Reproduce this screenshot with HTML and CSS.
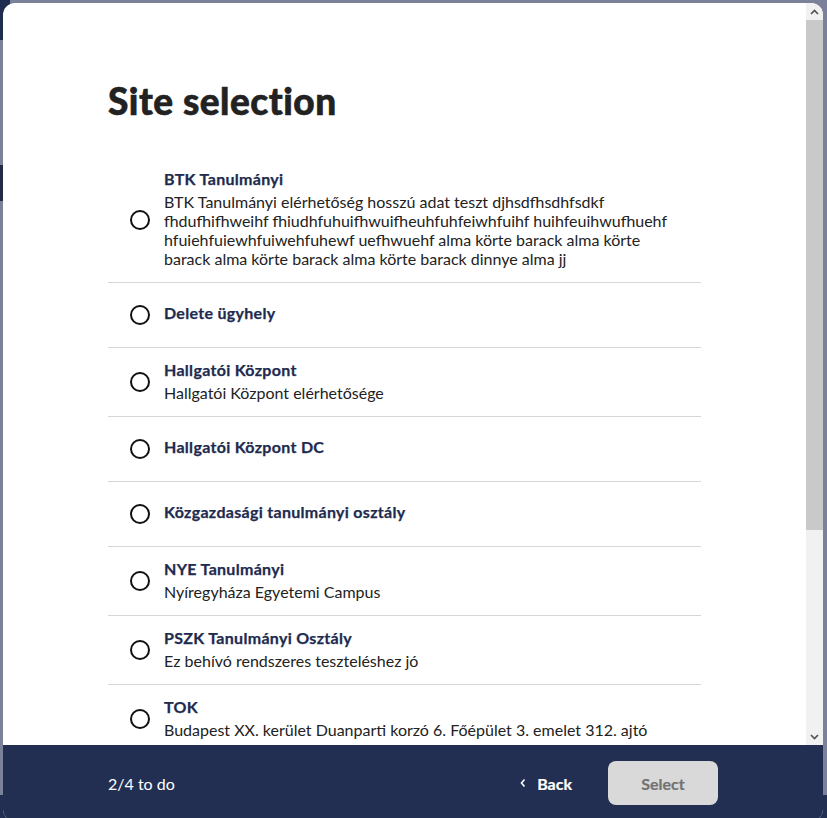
FILE: index.html
```html
<!DOCTYPE html>
<html lang="hu">
<head>
<meta charset="utf-8">
<title>Site selection</title>
<link rel="stylesheet" href="styles.css">
</head>
<body>
<div class="backdrop">
  <div class="bg-header"></div>
  <div class="bg-side"></div>
  <div class="bg-footer"></div>
</div>
<div class="modal" role="dialog" aria-labelledby="title">
  <div class="modal-main">
    <div class="modal-body">
      <h1 id="title" class="modal-title">Site selection</h1>
      <ul class="site-list">
        <li class="site">
          <span class="radio"></span>
          <div class="site-text">
            <div class="site-name">BTK Tanulmányi</div>
            <div class="site-desc">BTK Tanulmányi elérhetőség hosszú adat teszt djhsdfhsdhfsdkf fhdufhifhweihf fhiudhfuhuifhwuifheuhfuhfeiwhfuihf huihfeuihwufhuehf hfuiehfuiewhfuiwehfuhewf uefhwuehf alma körte barack alma körte barack alma körte barack alma körte barack dinnye alma jj</div>
          </div>
        </li>
        <li class="site">
          <span class="radio"></span>
          <div class="site-text">
            <div class="site-name">Delete ügyhely</div>
          </div>
        </li>
        <li class="site">
          <span class="radio"></span>
          <div class="site-text">
            <div class="site-name">Hallgatói Központ</div>
            <div class="site-desc">Hallgatói Központ elérhetősége</div>
          </div>
        </li>
        <li class="site">
          <span class="radio"></span>
          <div class="site-text">
            <div class="site-name">Hallgatói Központ DC</div>
          </div>
        </li>
        <li class="site">
          <span class="radio"></span>
          <div class="site-text">
            <div class="site-name">Közgazdasági tanulmányi osztály</div>
          </div>
        </li>
        <li class="site">
          <span class="radio"></span>
          <div class="site-text">
            <div class="site-name">NYE Tanulmányi</div>
            <div class="site-desc">Nyíregyháza Egyetemi Campus</div>
          </div>
        </li>
        <li class="site">
          <span class="radio"></span>
          <div class="site-text">
            <div class="site-name">PSZK Tanulmányi Osztály</div>
            <div class="site-desc">Ez behívó rendszeres teszteléshez jó</div>
          </div>
        </li>
        <li class="site">
          <span class="radio"></span>
          <div class="site-text">
            <div class="site-name">TOK</div>
            <div class="site-desc">Budapest XX. kerület Duanparti korzó 6. Főépület 3. emelet 312. ajtó</div>
          </div>
        </li>
      </ul>
    </div>
    <div class="scrollbar" aria-hidden="true">
      <div class="sb-btn">
        <svg width="9" height="6" viewBox="0 0 9 6"><path d="M1 5 L4.5 1.5 L8 5" fill="none" stroke="#505050" stroke-width="1.6"/></svg>
      </div>
      <div class="sb-track"><div class="sb-thumb"></div></div>
      <div class="sb-btn">
        <svg width="9" height="6" viewBox="0 0 9 6"><path d="M1 1 L4.5 4.5 L8 1" fill="none" stroke="#505050" stroke-width="1.6"/></svg>
      </div>
    </div>
  </div>
  <div class="modal-footer">
    <span class="progress">2/4 to do</span>
    <div class="actions">
      <button class="btn-back" type="button">
        <svg width="8" height="10" viewBox="0 0 8 10" aria-hidden="true"><path d="M5.5 1.5 L2.5 5 L5.5 8.5" fill="none" stroke="#fff" stroke-width="1.6"/></svg>
        Back
      </button>
      <button class="btn-select" type="button" disabled>Select</button>
    </div>
  </div>
</div>
</body>
</html>
```

FILE: styles.css
```css
html, body {
  margin: 0;
  padding: 0;
  height: 100%;
}

body {
  background: #7b8199;
  font-family: Lato, "Liberation Sans", sans-serif;
  overflow: hidden;
}

.backdrop {
  position: fixed;
  inset: 0;
}

.bg-header {
  position: absolute;
  left: 0;
  top: 0;
  width: 10px;
  height: 40px;
  background: #1f2c4f;
}

.bg-side {
  position: absolute;
  left: 0;
  top: 165px;
  width: 10px;
  height: 36px;
  background: #222a44;
}

.bg-footer {
  position: absolute;
  left: 0;
  right: 0;
  bottom: 0;
  height: 23px;
  background: #222f52;
}

.modal {
  position: absolute;
  left: 3px;
  top: 3px;
  width: 820px;
  height: 818px;
  background: #fff;
  border-radius: 12px;
  overflow: hidden;
  display: flex;
  flex-direction: column;
}

.modal-main {
  flex: 1;
  min-height: 0;
  display: flex;
}

.modal-body {
  flex: 1;
  min-width: 0;
  overflow: hidden;
  padding: 0 105px;
}

.scrollbar {
  flex: none;
  width: 17px;
  display: flex;
  flex-direction: column;
  background: #f1f1f1;
}

.sb-btn {
  flex: none;
  height: 17px;
  display: flex;
  align-items: center;
  justify-content: center;
}

.sb-track {
  flex: 1;
}

.sb-thumb {
  height: 510px;
  background: #c9c9c9;
}

.modal-title {
  margin: 77px 0 0;
  font-size: 37px;
  line-height: 42px;
  font-weight: 900;
  letter-spacing: 0.5px;
  color: #222;
  -webkit-text-stroke: 0.6px #222;
}

.site-list {
  list-style: none;
  margin: 35px 0 0;
  padding: 0;
}

.site {
  display: flex;
  align-items: center;
  gap: 14px;
  min-height: 65px;
  box-sizing: border-box;
  padding: 11px 22px 14px;
  border-bottom: 1px solid #d6d6d6;
}

.radio {
  flex: none;
  width: 20px;
  height: 20px;
  margin-top: 3px;
  box-sizing: border-box;
  border: 2px solid #111;
  border-radius: 50%;
}

.site-text {
  flex: 1;
  min-width: 0;
}

.site-name {
  margin-bottom: 3px;
  font-size: 16px;
  line-height: 21px;
  font-weight: 700;
  letter-spacing: 0.3px;
  color: #1e2b4f;
  -webkit-text-stroke: 0.25px #1e2b4f;
}

.site-desc {
  font-size: 16px;
  line-height: 19px;
  color: #222;
}

.modal-footer {
  flex: none;
  height: 76px;
  box-sizing: border-box;
  padding: 0 105px;
  background: #222f52;
  display: flex;
  align-items: center;
  justify-content: space-between;
  color: #fff;
}

.progress {
  font-size: 16px;
}

.actions {
  display: flex;
  align-items: center;
  gap: 36px;
}

.btn-back {
  display: flex;
  align-items: center;
  gap: 10px;
  background: none;
  border: 0;
  padding: 0;
  color: #fff;
  font-family: inherit;
  font-size: 16px;
  font-weight: 700;
  -webkit-text-stroke: 0.2px #fff;
}

.btn-select {
  width: 110px;
  height: 44px;
  border: 0;
  border-radius: 8px;
  background: #d9d9d9;
  color: #727272;
  font-family: inherit;
  font-size: 16px;
  font-weight: 700;
  -webkit-text-stroke: 0.2px #727272;
}
```
